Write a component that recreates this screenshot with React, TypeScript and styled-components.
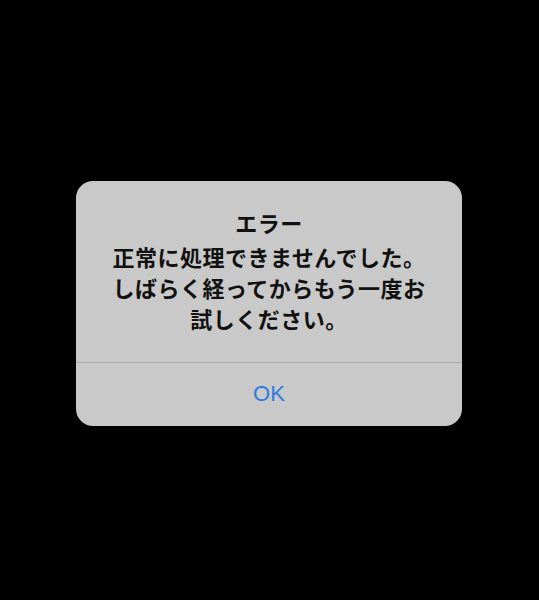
import styled, { createGlobalStyle } from "styled-components";

const GlobalStyle = createGlobalStyle`
  html, body {
    margin: 0;
    padding: 0;
    background: #000;
  }
`;

export default function App() {
  return (
    <>
      <GlobalStyle />
      <Screen>
        <Alert>
          <AlertBody>
            <AlertTitle>エラー</AlertTitle>
            <AlertMessage>
              正常に処理できませんでした。しばらく経ってからもう一度お試しください。
            </AlertMessage>
          </AlertBody>
          <AlertButton type="button">OK</AlertButton>
        </Alert>
      </Screen>
    </>
  );
}

const Screen = styled.div`
  width: 100%;
  height: 600px;
  box-sizing: border-box;
  padding-top: 6px;
  padding-right: 1px;
  display: flex;
  align-items: center;
  justify-content: center;
  background: #000;
`;

const Alert = styled.div`
  width: 386px;
  display: flex;
  flex-direction: column;
  background: #c9c9c9;
  border-radius: 17px;
  overflow: hidden;
`;

const AlertBody = styled.div`
  padding: 25px 28px 28px;
  text-align: center;
  color: #111;
  font-family: "Noto Sans CJK JP", "Noto Sans", sans-serif;
  border-bottom: 1px solid #a9a9a9;
`;

const AlertTitle = styled.div`
  font-size: 22px;
  line-height: 32px;
  font-weight: 700;
  letter-spacing: 0.5px;
`;

const AlertMessage = styled.div`
  margin-top: 3px;
  font-size: 22px;
  line-height: 31px;
  font-weight: 600;
  letter-spacing: 0.5px;
`;

const AlertButton = styled.button`
  height: 63px;
  border: none;
  background: transparent;
  color: #2b7be0;
  font-family: "Liberation Sans", Arial, sans-serif;
  font-size: 22px;
  cursor: pointer;
`;
